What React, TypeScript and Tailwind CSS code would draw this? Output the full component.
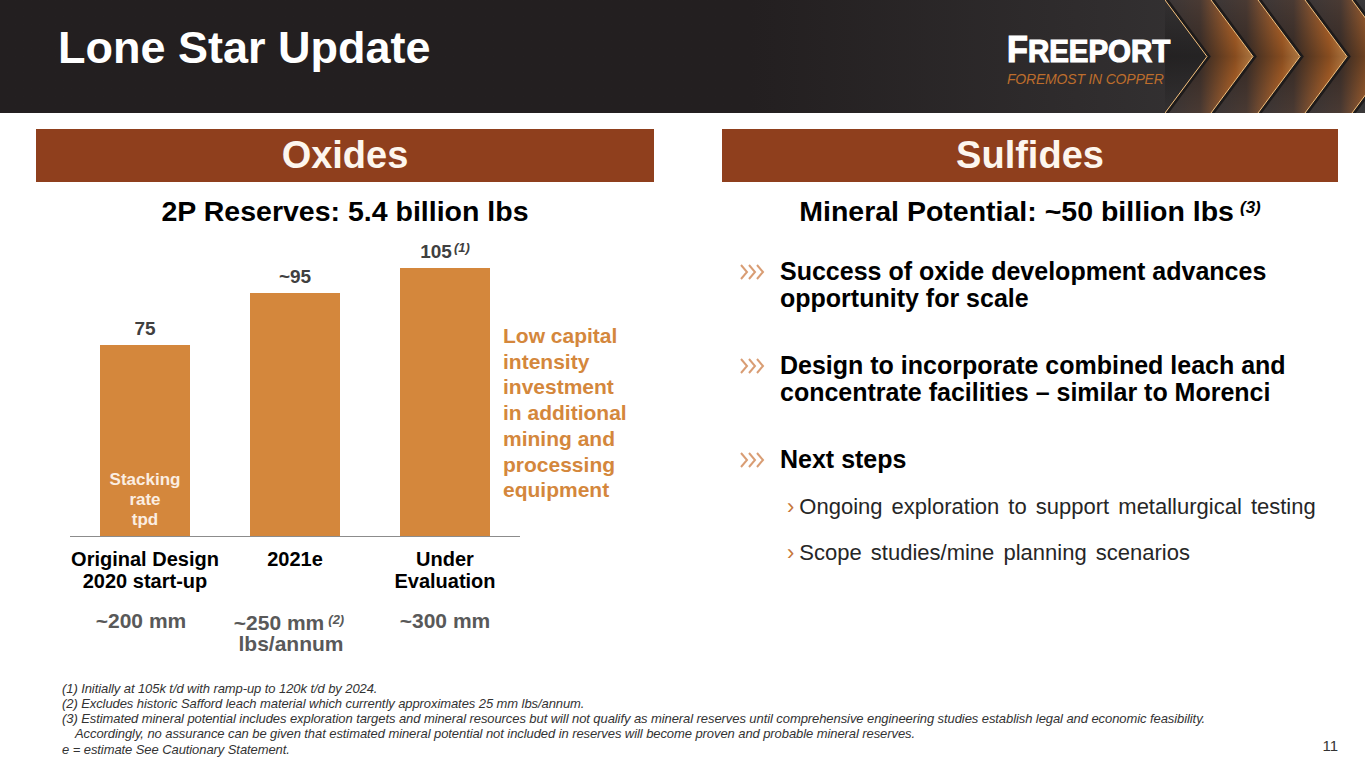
import React from "react";

const BARS = [
  { value: "75", note: "", height: 191, label: ["Original Design", "2020 start-up"] },
  { value: "~95", note: "", height: 243, label: ["2021e"] },
  { value: "105", note: "(1)", height: 268, label: ["Under", "Evaluation"] },
];

function HeaderChevrons() {
  // tips of the glowing chevrons, in svg coordinates
  const tips = [42, 88, 135, 182, 229];
  const slope = 42;
  return (
    <svg width="200" height="113" viewBox="0 0 200 113" className="shrink-0 -ml-[8px]">
      <defs>
        <linearGradient id="glow" x1="0" y1="0" x2="1" y2="0">
          <stop offset="0" stopColor="#3a3637" />
          <stop offset="0.4" stopColor="#4a3a33" />
          <stop offset="0.8" stopColor="#c06c2c" />
          <stop offset="1" stopColor="#f4a85c" />
        </linearGradient>
        <linearGradient id="fade" x1="0" y1="0" x2="0" y2="1">
          <stop offset="0" stopColor="#000" stopOpacity="0" />
          <stop offset="0.5" stopColor="#000" stopOpacity="0.3" />
          <stop offset="1" stopColor="#000" stopOpacity="0" />
        </linearGradient>
      </defs>
      {tips.slice(0, -1).map((t, i) => {
        const n = tips[i + 1];
        const pts = `${t - slope},0 ${t},56.5 ${t - slope},113 ${n - slope},113 ${n},56.5 ${n - slope},0`;
        return <polygon key={t} points={pts} fill="url(#glow)" />;
      })}
      <rect x="0" y="0" width="200" height="113" fill="url(#fade)" />
      {tips.map((t) => (
        <g key={t}>
          <polyline
            points={`${t - slope},0 ${t},56.5 ${t - slope},113`}
            fill="none"
            stroke="#1e1b1b"
            strokeWidth="3"
            transform="translate(2 0)"
          />
          <polyline
            points={`${t - slope},0 ${t},56.5 ${t - slope},113`}
            fill="none"
            stroke="#f6c27e"
            strokeWidth="1"
          />
        </g>
      ))}
    </svg>
  );
}

function Banner({ children }: { children: React.ReactNode }) {
  return (
    <div className="h-[53px] bg-[#8f3f1d] flex items-center justify-center text-[38px] font-bold text-[#fdf6ee]">
      {children}
    </div>
  );
}

function Arrows() {
  return (
    <svg width="26" height="18" viewBox="0 0 26 18" className="shrink-0 mt-[5px]">
      {[1, 9, 17].map((x) => (
        <polyline
          key={x}
          points={`${x},2 ${x + 6},9 ${x},16`}
          fill="none"
          stroke="#d99d74"
          strokeWidth="2"
        />
      ))}
    </svg>
  );
}

export default function App() {
  return (
    <div className="w-[1365px] h-[768px] overflow-hidden bg-white flex flex-col font-['Liberation_Sans',Arial,sans-serif] text-black">
      {/* Header */}
      <header className="h-[113px] shrink-0 flex bg-linear-to-r from-[#231f20] from-55% to-[#3a3839]">
        <h1 className="pl-[58px] pt-[23px] text-[45px] leading-[50px] font-bold text-white">
          Lone Star Update
        </h1>
        <div className="flex-1" />
        <div className="relative z-10 pt-[32px] w-[166px] shrink-0">
          <div className="origin-left scale-x-[0.95] whitespace-nowrap text-white font-bold leading-none [-webkit-text-stroke:1.2px_white]">
            <span className="text-[36px]">F</span>
            <span className="text-[31px]">REEPORT</span>
          </div>
          <div className="mt-[3px] text-[14px] leading-[16px] italic text-[#bd6d2c] tracking-[-0.2px] whitespace-nowrap">
            FOREMOST IN COPPER
          </div>
        </div>
        <HeaderChevrons />
      </header>

      {/* Body */}
      <main className="flex gap-[68px] pl-[36px] pr-[27px] pt-[16px]">
        {/* Oxides */}
        <section className="w-[618px] shrink-0 flex flex-col">
          <Banner>Oxides</Banner>
          <h2 className="mt-[14px] text-center text-[28.5px] leading-[30px] font-bold">
            2P Reserves: 5.4 billion lbs
          </h2>

          <div className="flex pl-[34px]">
            <div className="w-[450px] h-[311px] shrink-0 flex items-end border-b border-[#8c8c8c]">
              {BARS.map((b, i) => (
                <div key={b.value} className="w-[150px] flex flex-col items-center">
                  <div className="mb-[6px] text-[19px] leading-[21px] font-bold text-[#404040]">
                    {b.value}
                    {b.note && (
                      <sup className="ml-[2px] text-[13px] italic font-bold">{b.note}</sup>
                    )}
                  </div>
                  <div
                    className="w-[90px] bg-[#d4873c] flex flex-col justify-end items-center pb-[6px]"
                    style={{ height: b.height }}
                  >
                    {i === 0 && (
                      <div className="text-center text-[17px] leading-[20px] font-bold text-[#fbeee2]">
                        Stacking
                        <br />
                        rate
                        <br />
                        tpd
                      </div>
                    )}
                  </div>
                </div>
              ))}
            </div>
            <p className="self-end -ml-[17px] mb-[34px] text-[21px] leading-[25.7px] font-bold text-[#d4873c] whitespace-nowrap">
              Low capital
              <br />
              intensity
              <br />
              investment
              <br />
              in additional
              <br />
              mining and
              <br />
              processing
              <br />
              equipment
            </p>
          </div>

          <div className="flex pl-[34px] mt-[11px]">
            {BARS.map((b) => (
              <div key={b.value} className="w-[150px] text-center text-[20px] leading-[22px] font-bold">
                {b.label.map((l) => (
                  <div key={l}>{l}</div>
                ))}
              </div>
            ))}
          </div>

          <div className="flex pl-[34px] mt-[18px] text-[21px] font-bold text-[#595959]">
            <div className="w-[150px] text-center leading-[22px] -ml-[4px]">~200 mm</div>
            <div className="w-[150px] flex flex-col items-center pt-[3px]">
              <div className="leading-[20px] -ml-[4px] whitespace-nowrap">
                ~250 mm<span className="ml-[4px] relative -top-[6px] text-[13px] italic">(2)</span>
              </div>
              <div className="leading-[16px]">lbs/annum</div>
            </div>
            <div className="w-[150px] text-center leading-[22px] ml-[4px]">~300 mm</div>
          </div>
        </section>

        {/* Sulfides */}
        <section className="flex-1 flex flex-col">
          <Banner>Sulfides</Banner>
          <h2 className="mt-[14px] text-center text-[28.5px] leading-[30px] font-bold">
            Mineral Potential: ~50 billion lbs
            <sup className="ml-[6px] text-[17px] italic">(3)</sup>
          </h2>

          <ul className="mt-[32px] pl-[18px] flex flex-col gap-[40px] text-[25px] leading-[27px] font-bold">
            <li className="flex gap-[14px]">
              <Arrows />
              <span className="whitespace-nowrap">
                Success of oxide development advances
                <br />
                opportunity for scale
              </span>
            </li>
            <li className="flex gap-[14px]">
              <Arrows />
              <span className="whitespace-nowrap">
                Design to incorporate combined leach and
                <br />
                concentrate facilities – similar to Morenci
              </span>
            </li>
            <li className="flex gap-[14px]">
              <Arrows />
              <span>Next steps</span>
            </li>
          </ul>

          <ul className="mt-[22px] pl-[65px] flex flex-col gap-[22px] text-[22px] leading-[24px] text-[#262626] [word-spacing:3px] whitespace-nowrap">
            <li>
              <span className="mr-[5px] text-[#c7773a]">›</span>
              Ongoing exploration to support metallurgical testing
            </li>
            <li>
              <span className="mr-[5px] text-[#c7773a]">›</span>
              Scope studies/mine planning scenarios
            </li>
          </ul>
        </section>
      </main>

      {/* Footer */}
      <footer className="mt-auto flex items-end justify-between pl-[62px] pr-[27px] pb-[11px]">
        <div className="text-[13px] leading-[15.3px] italic text-[#333] tracking-[-0.08px]">
          <div>(1) Initially at 105k t/d with ramp-up to 120k t/d by 2024.</div>
          <div>(2) Excludes historic Safford leach material which currently approximates 25 mm lbs/annum.</div>
          <div>
            (3) Estimated mineral potential includes exploration targets and mineral resources but will not qualify as
            mineral reserves until comprehensive engineering studies establish legal and economic feasibility.
          </div>
          <div className="pl-[13px]">
            Accordingly, no assurance can be given that estimated mineral potential not included in reserves will become
            proven and probable mineral reserves.
          </div>
          <div>e = estimate See Cautionary Statement.</div>
        </div>
        <div className="text-[15px] leading-[16px] text-[#333] mb-[3px]">11</div>
      </footer>
    </div>
  );
}
